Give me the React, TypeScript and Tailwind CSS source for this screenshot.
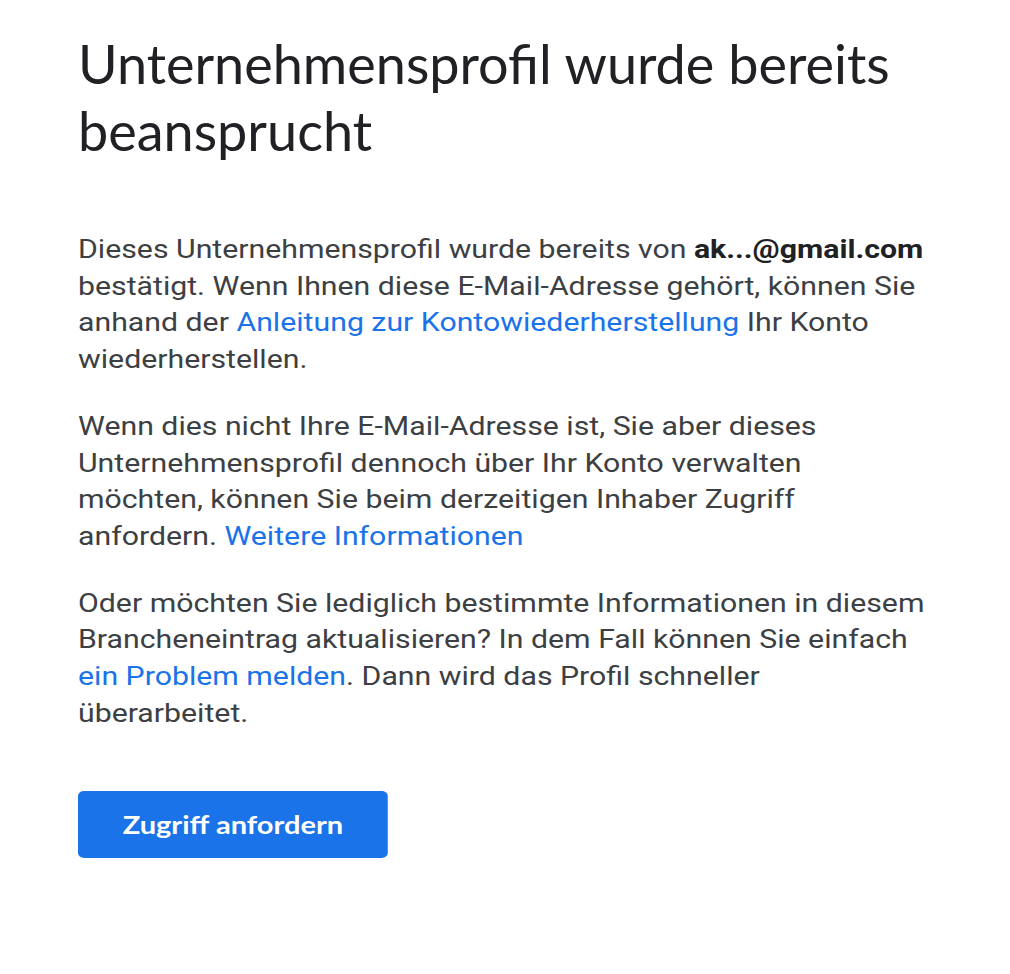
export default function App() {
  return (
    <div className="min-h-screen bg-white pl-[78px] pt-[30px]">
      <h1
        className="w-[880px] text-[54px] leading-[67px] text-[#202124] font-normal"
        style={{ fontFamily: 'Lato, Roboto, sans-serif' }}
      >
        Unternehmensprofil wurde bereits beansprucht
      </h1>

      {/* the reference is stretched horizontally, so the body is too */}
      <div className="mt-[68px] w-[706px] origin-top-left scale-x-[1.21]">
        <div
          className="text-[25px] leading-[36.7px] text-[#3c4043]"
          style={{ fontFamily: 'Roboto, "Liberation Sans", sans-serif' }}
        >
          <p>
            Dieses Unternehmensprofil wurde bereits von{' '}
            <span className="font-bold text-[#202124]">ak...@gmail.com</span> bestätigt. Wenn Ihnen diese
            E-Mail-Adresse gehört, können Sie anhand der{' '}
            <a href="#" className="text-[#1a73e8]">
              Anleitung zur Kontowiederherstellung
            </a>{' '}
            Ihr Konto wiederherstellen.
          </p>
          <p className="mt-[30px]">
            Wenn dies nicht Ihre E-Mail-Adresse ist, Sie aber dieses Unternehmensprofil dennoch über Ihr Konto
            verwalten möchten, können Sie beim derzeitigen Inhaber Zugriff anfordern.{' '}
            <a href="#" className="text-[#1a73e8]">
              Weitere Informationen
            </a>
          </p>
          <p className="mt-[30px]">
            Oder möchten Sie lediglich bestimmte Informationen in diesem Brancheneintrag aktualisieren? In dem
            Fall können Sie einfach{' '}
            <a href="#" className="text-[#1a73e8]">
              ein Problem melden
            </a>
            . Dann wird das Profil schneller überarbeitet.
          </p>
        </div>

        <button
          type="button"
          className="mt-[59px] h-[67px] w-[256px] rounded-[5px] bg-[#1a73e8] text-white text-[24px] font-bold"
          style={{ fontFamily: 'Lato, Roboto, sans-serif' }}
        >
          Zugriff anfordern
        </button>
      </div>
    </div>
  )
}
